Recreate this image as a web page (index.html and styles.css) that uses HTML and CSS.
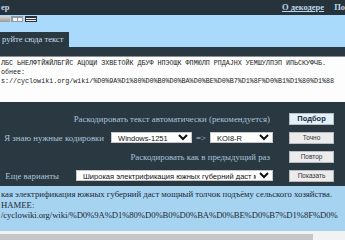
FILE: index.html
```html
<!DOCTYPE html>
<html lang="ru">
<head>
    <meta charset="UTF-8">
    <meta name="viewport" content="width=device-width, initial-scale=1.0">
    <title>Декодер</title>
    <link rel="stylesheet" href="styles.css">
</head>
<body>
    <div class="topbar">
        <span class="brand">ер</span>
        <nav class="links">
            <a href="#">О декодере</a>
            <a href="#">По</a>
        </nav>
    </div>

    <div class="band">
        <div class="tools">
            <span class="tool tool-grey"></span>
            <span class="tool tool-boxes"><i></i><i></i></span>
            <span class="tool tool-lines"><i></i><i></i></span>
        </div>
        <div class="tab">руйте сюда текст</div>
    </div>

    <div class="panel">
        <textarea class="source" wrap="off" readonly>ЛБС ЬНЕЛФТЙЖЙЛБГЙС АЦОЩИ ЗХВЕТОЙК ДБУФ НПЭОЩК ФПМЮЛП РПДАЈНХ УЕМШУЛПЭП ИПЬСКУФЧБ.
обнее:
s://cyclowiki.org/wiki/%D0%9A%D1%80%D0%B0%D0%BA%D0%BE%D0%B7%D1%8F%D0%B1%D1%80%D1%88</textarea>

        <div class="form">
            <div class="row">
                <span class="label">Раскодировать текст автоматически (рекомендуется)</span>
            </div>
            <button class="btn btn-main">Подбор</button>

            <div class="row">
                <span class="label">Я знаю нужные кодировки</span>
                <select class="enc">
                    <option>Windows-1251</option>
                </select>
                <span class="label">=&gt;</span>
                <select class="enc">
                    <option>KOI8-R</option>
                </select>
            </div>
            <button class="btn">Точно</button>

            <div class="row">
                <span class="label">Раскодировать как в предыдущий раз</span>
            </div>
            <button class="btn">Повтор</button>

            <div class="row">
                <span class="label">Еще варианты</span>
                <select class="variants">
                    <option>Широкая электрификация южных губерний даст мощный толчок подъёму сельского хозяйства.</option>
                </select>
            </div>
            <button class="btn">Показать</button>
        </div>
    </div>

    <div class="result">
        <p>кая электрификация южных губерний даст мощный толчок подъёму сельского хозяйства.</p>
        <p>НАМЕЕ:</p>
        <p>/cyclowiki.org/wiki/%D0%9A%D1%80%D0%B0%D0%BA%D0%BE%D0%B7%D1%8F%D0%</p>
    </div>

    <div class="scroll">
        <div class="thumb"></div>
    </div>
</body>
</html>
```

FILE: styles.css
```css
body {
    margin: 0;
    width: 345px;
    height: 240px;
    overflow: hidden;
    background-color: #f2f2f2;
    font-family: "Liberation Serif", "Times New Roman", serif;
}
.topbar {
    display: flex;
    justify-content: space-between;
    height: 15px;
    background-color: #27333b;
    color: #bcd6ea;
    font-size: 8.5px;
    font-weight: bold;
    line-height: 14px;
}
.brand {
    padding-left: 1px;
}
.links {
    display: flex;
    gap: 10px;
}
.links a {
    color: #bcd6ea;
}
.links a:last-child {
    text-decoration: none;
}
.band {
    height: 32px;
    background-color: #a9dafb;
    display: flex;
    flex-direction: column;
    justify-content: space-between;
}
.tools {
    display: flex;
    gap: 1px;
    padding-top: 1px;
}
.tool {
    display: flex;
    align-items: center;
    justify-content: center;
    gap: 1px;
    height: 6px;
}
.tool-grey {
    width: 10px;
    background: linear-gradient(#d8d8d8, #9a9a9a);
}
.tool-boxes {
    width: 12px;
    background-color: #8f9aa2;
}
.tool-boxes i {
    width: 4px;
    height: 3px;
    background-color: #f4f4f4;
}
.tool-lines {
    width: 12px;
    margin-left: 1px;
    flex-direction: column;
    background-color: #2a3036;
}
.tool-lines i {
    width: 10px;
    height: 1px;
    background-color: #f0f0f0;
}
.tab {
    align-self: flex-start;
    width: 67px;
    height: 15px;
    padding-left: 2px;
    background-color: #2a3842;
    color: #c6dcec;
    font-size: 8.5px;
    line-height: 15px;
    white-space: nowrap;
}
.panel {
    background-color: #2a3842;
    padding-top: 9px;
    height: 130px;
}
.source {
    display: block;
    box-sizing: border-box;
    width: 345px;
    height: 46px;
    margin: 0;
    padding: 2px 0 0 1px;
    border: none;
    border-top: 1px solid #8a9096;
    background-color: #fdfdfd;
    color: #222;
    font-family: "Liberation Mono", "DejaVu Sans Mono", monospace;
    font-size: 6.7px;
    line-height: 9px;
    resize: none;
    overflow: hidden;
}
.form {
    display: grid;
    grid-template-columns: 273px 45px;
    grid-auto-rows: 19px;
    column-gap: 16px;
    align-items: center;
    padding-top: 7px;
}
.row {
    display: flex;
    justify-content: flex-end;
    align-items: center;
    gap: 4px;
    color: #a9c3d6;
    font-size: 8.8px;
    white-space: nowrap;
}
.row .label:first-child {
    margin-right: 3px;
}
select {
    height: 11px;
    padding: 0 0 0 2px;
    border: 1px solid #c8c8c8;
    border-radius: 0;
    background-color: #fff;
    color: #111;
    font-family: "Liberation Sans", Arial, sans-serif;
    font-size: 7.5px;
}
.enc {
    width: 81px;
}
.enc:last-child {
    width: 63px;
}
.variants {
    width: 197px;
    margin-left: 10px;
}
.btn {
    height: 12px;
    padding: 0;
    border: 1px solid #b8bcc0;
    border-radius: 0;
    background-color: #ececec;
    color: #333;
    font-family: "Liberation Sans", Arial, sans-serif;
    font-size: 6.5px;
    cursor: pointer;
}
.btn-main {
    background-color: #e2f1fb;
    color: #1c2a36;
    font-weight: bold;
    font-size: 7.5px;
}
.result {
    height: 42px;
    padding-top: 3px;
    padding-left: 1px;
    background-color: #a6d3ef;
    color: #1b2936;
    font-size: 8.7px;
    line-height: 10.5px;
    white-space: nowrap;
    overflow: hidden;
}
.result p {
    margin: 0;
}
.result p:last-child {
    letter-spacing: -0.1px;
}
.scroll {
    padding-top: 3px;
}
.thumb {
    width: 313px;
    height: 6px;
    background-color: #c6c6c6;
}
```
